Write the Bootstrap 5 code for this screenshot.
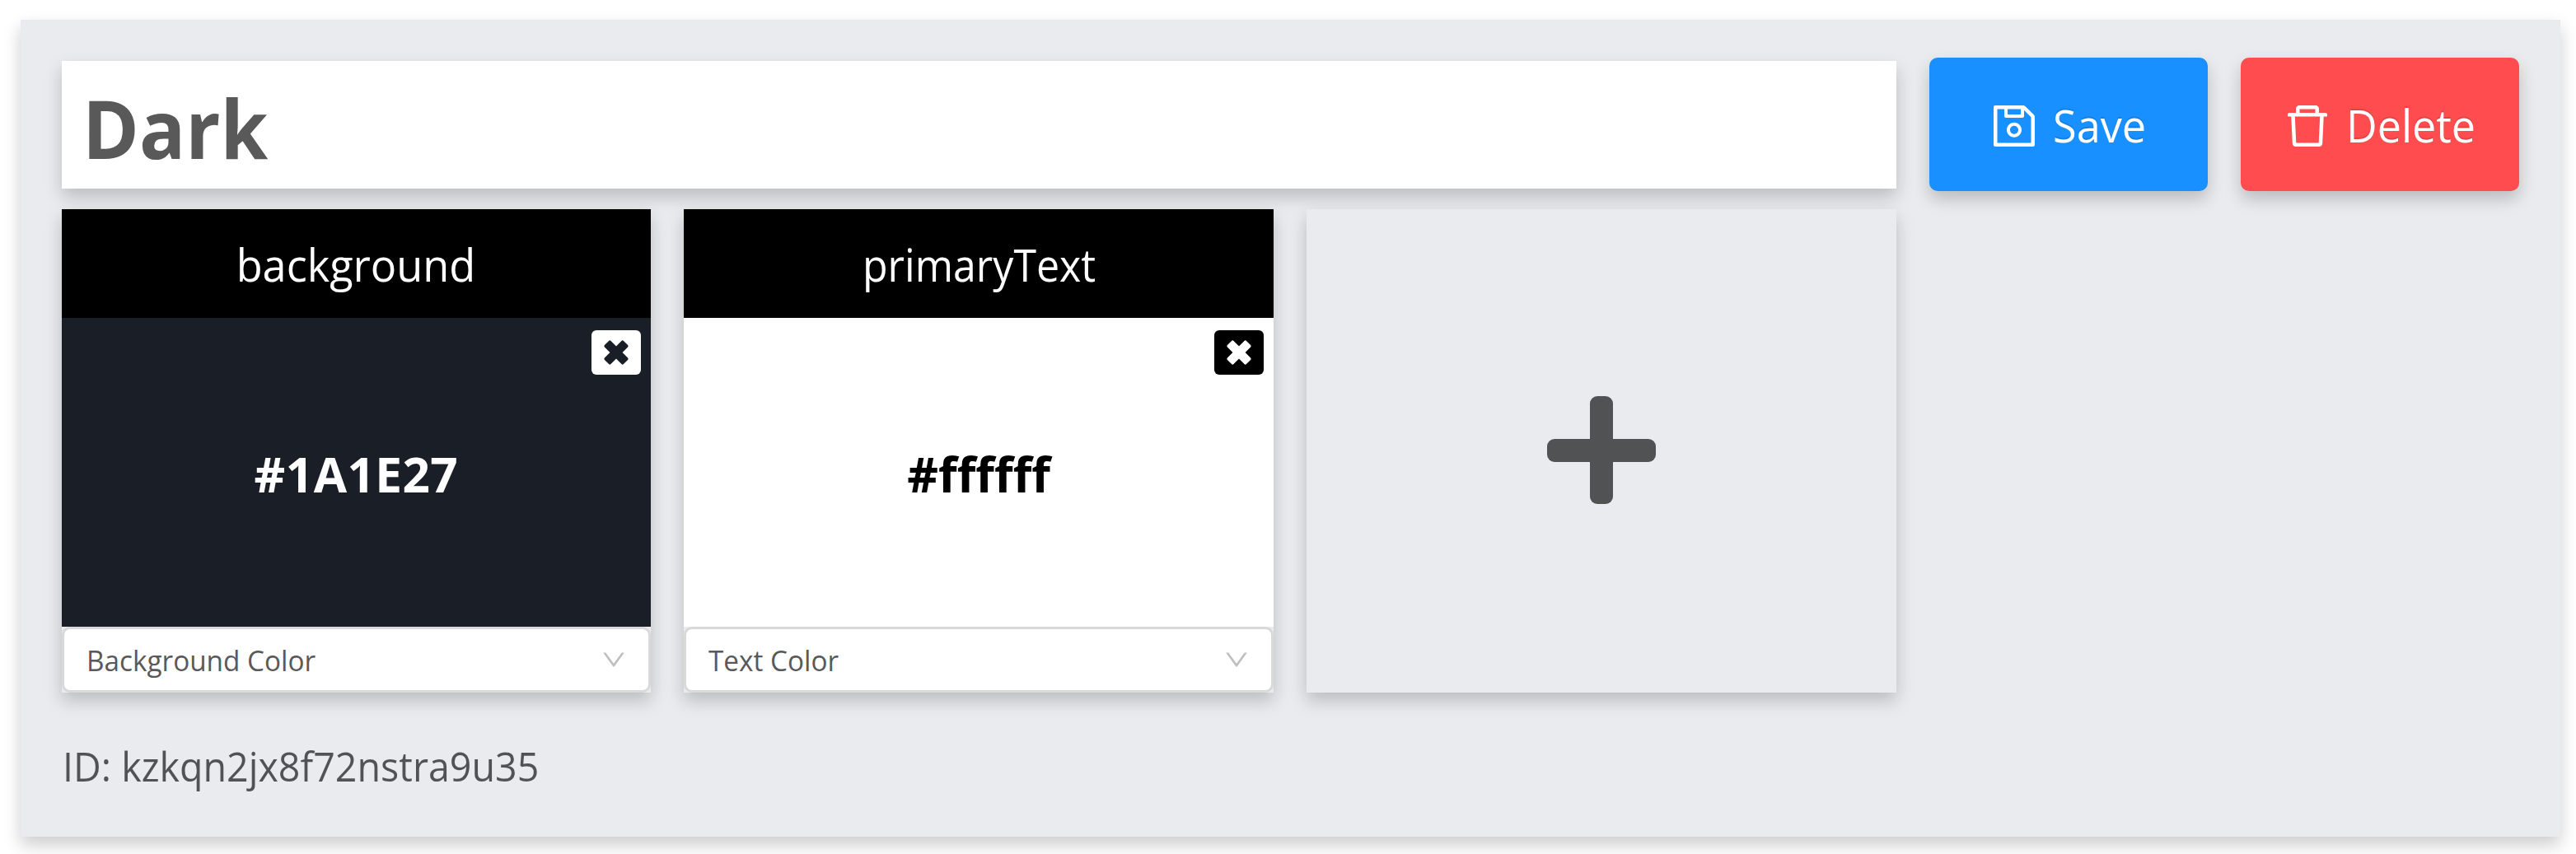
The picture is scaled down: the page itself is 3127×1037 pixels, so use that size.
<!DOCTYPE html>
<html lang="en">
<head>
<meta charset="utf-8">
<title>Theme editor</title>
<link href="https://cdn.jsdelivr.net/npm/bootstrap@5.3.0/dist/css/bootstrap.min.css" rel="stylesheet">
<style>
body{background:#fff;font-family:"Open Sans","Noto Sans",sans-serif;color:rgba(0,0,0,.65);padding:24px 19px 21px 25px;font-variant-ligatures:none}
.theme-panel{height:992px;padding:46px 50.5px 0 49.5px;background:#e9ebee}
.lift{box-shadow:0 10px 20px rgba(0,0,0,.2)}
.theme-row{--bs-gutter-x:40px}
/* labels are set slightly condensed */
.cond{display:inline-block;transform:scaleX(var(--sx,.95));transform-origin:0 50%;white-space:nowrap}
.cond-mid{transform-origin:50% 50%}
.name-box{height:155px;margin-top:4px;padding:0 25.5px;background:#fff;font-size:98px;font-weight:700;line-height:162px;color:#595959}
.act-btn{height:162px;border:0;border-radius:10px;color:#fff!important;font-size:55px;gap:19px;padding:3px 0 0;text-shadow:0 -2px 0 rgba(0,0,0,.12)}
.act-btn svg{width:56px;height:56px;flex:none}
.act-save{padding-left:75px}
.act-del{padding-left:53px}
.act-save,.act-save:hover{background:#1890ff}
.act-del,.act-del:hover{background:#ff4d4f}
.act-del .cond{--sx:.945}
.swatches{margin-top:22px}
.swatch{height:587px;background:#e9ebee}
.swatch-head{height:132px;background:#000;color:#fff;font-size:55px;line-height:134px}
.cond-tight{--sx:.91}
.swatch-body{height:375px;padding-top:4px;font-size:58.5px;font-weight:700;letter-spacing:.4px}
.dark-fill{background:#1a1e27;color:#fff}
.light-fill{background:#fff;color:#000}
.hex-light{letter-spacing:0}
.x-btn{top:15px;right:12px;width:60px;height:54px;border:0;border-radius:6px;padding:0}
.type-select{height:80px;border:3px solid #d9d9d9;border-radius:10px;background:#fff;padding:0 27px;font-size:34.5px;color:#595959}
.type-select .cond{--sx:.965;margin-top:1px}
.id-line{margin-top:53px;padding-left:1px;font-size:50px;line-height:72px}
.id-line .cond{--sx:.932}
</style>
</head>
<body>
<main class="theme-panel lift">
  <div class="row theme-row">
    <div class="col-9"><div class="name-box lift"><span class="cond">Dark</span></div></div>
    <div class="col"><button class="btn act-btn act-save lift w-100 d-flex align-items-center"><svg viewBox="64 64 896 896" fill="currentColor"><path d="M893.3 293.3L730.7 130.7c-7.5-7.5-16.7-13-26.7-16V112H144c-17.7 0-32 14.3-32 32v736c0 17.7 14.3 32 32 32h736c17.7 0 32-14.3 32-32V338.5c0-17-6.7-33.2-18.7-45.2zM384 184h256v104H384V184zm456 656H184V184h136v136c0 17.7 14.3 32 32 32h320c17.7 0 32-14.3 32-32V205.8l136 136V840zM512 442c-79.5 0-144 64.5-144 144s64.5 144 144 144 144-64.5 144-144-64.5-144-144-144zm0 224c-44.2 0-80-35.8-80-80s35.8-80 80-80 80 35.8 80 80-35.8 80-80 80z"/></svg><span class="cond">Save</span></button></div>
    <div class="col"><button class="btn act-btn act-del lift w-100 d-flex align-items-center"><svg viewBox="64 64 896 896" fill="currentColor"><path d="M360 184h-8c4.400 0 8-3.600 8-8v8h304v-8c0 4.400 3.600 8 8 8h-8v72h72v-80c0-35.300-28.700-64-64-64H352c-35.300 0-64 28.700-64 64v80h72v-72zm504 72H160c-17.700 0-32 14.300-32 32v32c0 4.400 3.600 8 8 8h60.400l24.700 523c1.600 34.100 29.800 61 63.900 61h454c34.200 0 62.300-26.800 63.900-61l24.700-523H888c4.400 0 8-3.600 8-8v-32c0-17.700-14.300-32-32-32zM731.300 840H292.700l-24.200-512h487l-24.200 512z"/></svg><span class="cond">Delete</span></button></div>
  </div>
  <div class="row theme-row swatches">
    <div class="col-3"><div class="swatch lift">
      <div class="swatch-head text-center"><span class="cond cond-mid">background</span></div>
      <div class="swatch-body dark-fill position-relative d-flex align-items-center justify-content-center"><span>#1A1E27</span>
        <button class="x-btn position-absolute light-fill d-flex align-items-center justify-content-center"><svg width="34" height="34" viewBox="-17 -17 34 34" fill="#1a1e27"><g transform="rotate(45)"><rect x="-16.300" y="-5.400" width="32.600" height="10.800" rx="1.800"/><rect x="-5.400" y="-16.300" width="10.800" height="32.600" rx="1.800"/></g></svg></button></div>
      <div class="type-select d-flex align-items-center justify-content-between"><span class="cond">Background Color</span><svg width="30" height="30" viewBox="64 64 896 896" fill="#bfbfbf"><path d="M884 256h-75c-5.100 0-9.900 2.500-12.900 6.600L512 654.200 227.900 262.600c-3-4.100-7.800-6.600-12.900-6.600h-75c-6.500 0-10.300 7.400-6.500 12.700l352.600 486.100c12.800 17.600 39 17.600 51.700 0l352.600-486.100c3.900-5.300.1-12.700-6.400-12.700z"/></svg></div>
    </div></div>
    <div class="col-3"><div class="swatch lift">
      <div class="swatch-head text-center"><span class="cond cond-mid cond-tight">primaryText</span></div>
      <div class="swatch-body light-fill position-relative d-flex align-items-center justify-content-center"><span class="hex-light">#ffffff</span>
        <button class="x-btn position-absolute d-flex align-items-center justify-content-center bg-black"><svg width="34" height="34" viewBox="-17 -17 34 34" fill="#fff"><g transform="rotate(45)"><rect x="-16.300" y="-5.400" width="32.600" height="10.800" rx="1.800"/><rect x="-5.400" y="-16.300" width="10.800" height="32.600" rx="1.800"/></g></svg></button></div>
      <div class="type-select d-flex align-items-center justify-content-between"><span class="cond">Text Color</span><svg width="30" height="30" viewBox="64 64 896 896" fill="#bfbfbf"><path d="M884 256h-75c-5.100 0-9.900 2.500-12.900 6.600L512 654.200 227.900 262.600c-3-4.100-7.800-6.600-12.900-6.600h-75c-6.500 0-10.300 7.400-6.500 12.700l352.600 486.100c12.800 17.600 39 17.600 51.700 0l352.600-486.100c3.900-5.300.1-12.700-6.400-12.700z"/></svg></div>
    </div></div>
    <div class="col-3"><div class="swatch lift d-flex align-items-center justify-content-center">
      <svg class="mb-1" width="132" height="132" viewBox="0 0 132 132" fill="#515253"><rect y="53" width="132" height="28" rx="9"/><rect x="52" y="1" width="28" height="131" rx="9"/></svg>
    </div></div>
  </div>
  <div class="id-line"><span class="cond">ID: kzkqn2jx8f72nstra9u35</span></div>
</main>
<script src="https://cdn.jsdelivr.net/npm/bootstrap@5.3.0/dist/js/bootstrap.bundle.min.js"></script>
</body>
</html>
